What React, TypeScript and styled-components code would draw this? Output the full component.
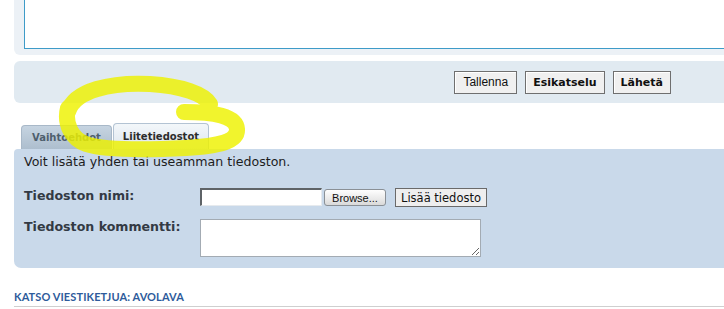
import React from 'react';
import styled, { createGlobalStyle } from 'styled-components';

const GlobalStyle = createGlobalStyle`
  html, body {
    margin: 0;
    padding: 0;
    background: #ffffff;
    overflow: hidden;
  }
  body {
    font-family: "DejaVu Sans", Verdana, sans-serif;
    font-size: 11px;
    color: #222;
  }
`;

const Page = styled.div`
  position: relative;
  width: 724px;
  height: 309px;
  overflow: hidden;
`;

const Column = styled.div`
  width: 730px;
  margin-left: 14px;
  display: flex;
  flex-direction: column;
`;

const EditorPanel = styled.div`
  background: #ecf1f6;
  border-bottom-left-radius: 6px;
  padding: 0 0 6px 10px;
  height: 49px;
`;

const MessageBox = styled.div`
  height: 48px;
  background: #fff;
  border: 1px solid #3e9bc8;
  border-top: none;
  border-right: none;
`;

const ActionBar = styled.div`
  margin-top: 6px;
  height: 42px;
  background: #e1eaf1;
  border-radius: 6px 0 0 6px;
  display: flex;
  align-items: center;
  justify-content: flex-end;
  gap: 8px;
  padding-right: 73px;
`;

const SubmitButton = styled.button<{ $bold?: boolean }>`
  height: 23px;
  padding: 0 ${({ $bold }) => ($bold ? '7px' : '8px')};
  background: #f0f0f0;
  border: 1px solid #6f6f6f;
  box-shadow: inset 1px 1px 0 #fff;
  font-family: ${({ $bold }) => ($bold ? '"DejaVu Sans", Verdana, sans-serif' : '"Liberation Sans", Arial, sans-serif')};
  font-size: ${({ $bold }) => ($bold ? '11px' : '12px')};
  font-weight: ${({ $bold }) => ($bold ? 700 : 400)};
  color: #111;
  cursor: pointer;
`;

const TabRow = styled.div`
  margin-top: 20px;
  padding-left: 7px;
  display: flex;
  align-items: flex-end;
  gap: 1px;
  height: 26px;
`;

const Tab = styled.div<{ $active?: boolean }>`
  box-sizing: border-box;
  height: ${({ $active }) => ($active ? '26px' : '24px')};
  padding: 0 ${({ $active }) => ($active ? '9px' : '10px')};
  display: flex;
  align-items: center;
  border: 1px solid ${({ $active }) => ($active ? '#b3c3d3' : '#a8b8c8')};
  border-bottom: none;
  border-radius: 4px 4px 0 0;
  background: ${({ $active }) =>
    $active
      ? 'linear-gradient(#f3f7fa, #dde6ef)'
      : 'linear-gradient(#c6d4e1, #adbece)'};
  color: ${({ $active }) => ($active ? '#2c2c2c' : '#4e5e6d')};
  font-size: 10px;
  font-weight: 700;
`;

const AttachPanel = styled.div`
  height: 119px;
  box-sizing: border-box;
  background: #c9d9ea;
  border-radius: 4px 0 0 7px;
  padding: 5px 0 0 10px;
  display: flex;
  flex-direction: column;
`;

const Intro = styled.div`
  font-size: 12.6px;
  line-height: 16px;
  color: #1d1d1d;
`;

const FormRow = styled.div<{ $gap: number }>`
  display: flex;
  align-items: flex-start;
  margin-top: ${({ $gap }) => $gap}px;
`;

const Label = styled.label<{ $top: number }>`
  width: 176px;
  flex-shrink: 0;
  padding-top: ${({ $top }) => $top}px;
  font-size: 12.6px;
  line-height: 13px;
  font-weight: 700;
  color: #333a44;
`;

const FileField = styled.input`
  box-sizing: border-box;
  width: 122px;
  height: 18px;
  margin: 0;
  padding: 0 2px;
  background: #fff;
  border-style: solid;
  border-width: 2px 1px 1px 2px;
  border-color: #5e6367 #e6eaee #e6eaee #5e6367;
  outline: none;
`;

const BrowseButton = styled.button`
  box-sizing: border-box;
  width: 62px;
  height: 17px;
  margin: 1px 0 0 2px;
  padding: 0;
  border: 1px solid #8a9096;
  border-radius: 3px;
  background: linear-gradient(#fefefe, #e9e9e9 60%, #d9d9d9);
  font-family: "Liberation Sans", Arial, sans-serif;
  font-size: 11px;
  color: #111;
`;

const AddButton = styled.button`
  box-sizing: border-box;
  height: 19px;
  margin-left: 9px;
  padding: 0 5px;
  border: 1px solid #6a6a6a;
  background: #eeeeee;
  font-family: "DejaVu Sans", Verdana, sans-serif;
  font-size: 11.5px;
  color: #111;
`;

const CommentBox = styled.textarea`
  box-sizing: border-box;
  width: 281px;
  height: 38px;
  margin: 0;
  border: 1px solid #a3abb3;
  background: #fff;
  outline: none;
`;

const ThreadTitle = styled.div`
  margin-top: 22px;
  padding-bottom: 3px;
  border-bottom: 1px solid #cfcfcf;
  font-family: Lato, "Open Sans", sans-serif;
  font-size: 11px;
  font-weight: 700;
  color: #2e5b9b;
  letter-spacing: 0.1px;
`;

const Highlight = styled.svg`
  position: absolute;
  left: 0;
  top: 0;
  pointer-events: none;
  opacity: 0.82;
`;

export default function App() {
  return (
    <Page>
      <GlobalStyle />
      <Column>
        <EditorPanel>
          <MessageBox />
        </EditorPanel>

        <ActionBar>
          <SubmitButton>Tallenna</SubmitButton>
          <SubmitButton $bold>Esikatselu</SubmitButton>
          <SubmitButton $bold>Lähetä</SubmitButton>
        </ActionBar>

        <TabRow>
          <Tab>Vaihtoehdot</Tab>
          <Tab $active>Liitetiedostot</Tab>
        </TabRow>

        <AttachPanel>
          <Intro>Voit lisätä yhden tai useamman tiedoston.</Intro>
          <FormRow $gap={18}>
            <Label $top={1}>Tiedoston nimi:</Label>
            <FileField type="text" />
            <BrowseButton>Browse...</BrowseButton>
            <AddButton>Lisää tiedosto</AddButton>
          </FormRow>
          <FormRow $gap={12}>
            <Label $top={1}>Tiedoston kommentti:</Label>
            <CommentBox />
          </FormRow>
        </AttachPanel>

        <ThreadTitle>KATSO VIESTIKETJUA: AVOLAVA</ThreadTitle>
      </Column>

      <Highlight width="724" height="309" viewBox="0 0 724 309">
        <g fill="none" stroke="#eef200" strokeWidth="16" strokeLinecap="round" strokeLinejoin="round">
          <path d="M68 112 C74 90 112 82 150 84 C182 86 204 94 210 104" />
          <path d="M184 112 C214 112 236 116 237 129 C238 142 218 146 186 148 C146 150 104 150 86 144 C72 139 64 124 68 108" />
        </g>
      </Highlight>
    </Page>
  );
}
